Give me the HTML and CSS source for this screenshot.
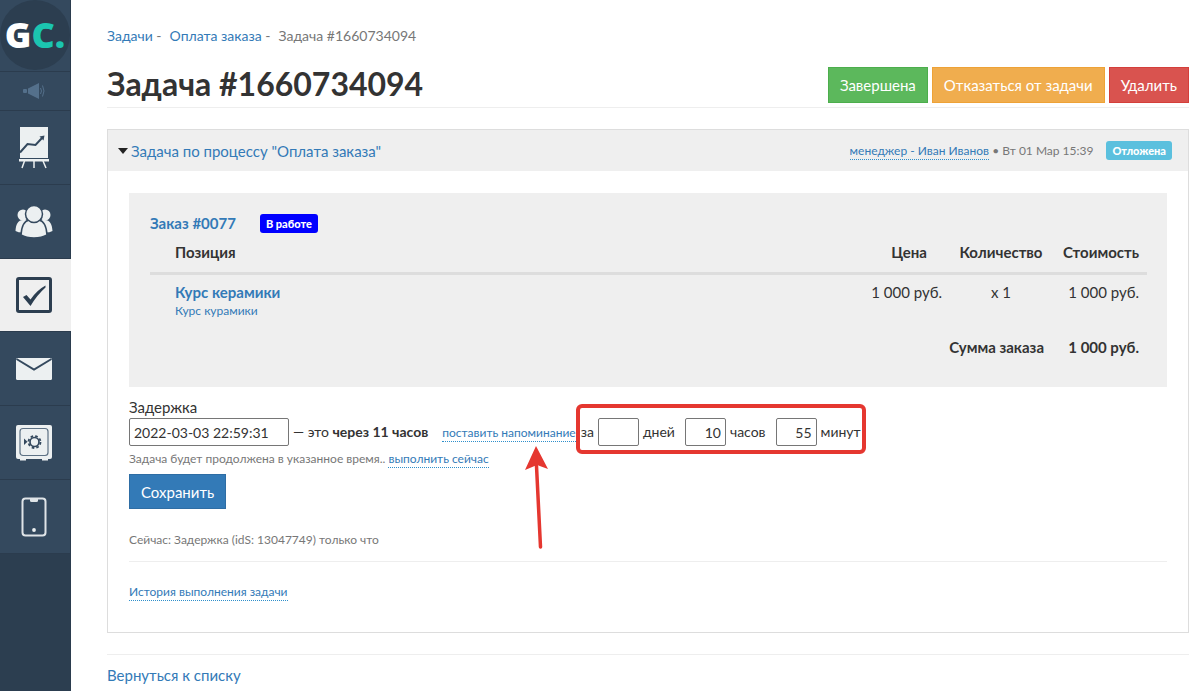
FILE: index.html
```html
<!DOCTYPE html>
<html lang="ru">
<head>
<meta charset="utf-8">
<meta name="viewport" content="width=device-width, initial-scale=1">
<title>Задача #1660734094</title>
<link rel="stylesheet" href="styles.css">
</head>
<body>
<div class="layout">
  <nav class="sidebar" aria-label="Главное меню">
    <a class="logo" href="#"><span class="logo-mark">G<span class="logo-accent">C.</span></span></a>
    <a class="nav-item nav-small" href="#" aria-label="Новости">
      <svg width="24" height="16" viewBox="0 0 24 16"><g fill="#54708b"><rect x="1" y="6" width="4" height="4" rx="1"/><path d="M6 5.500 17 0V16L6 10.500Z"/></g><path d="M18.500 5q2 3 0 6M20.500 2.500q3 5.500 0 11" fill="none" stroke="#54708b"/></svg>
    </a>
    <a class="nav-item" href="#" aria-label="Статистика">
      <svg width="30" height="42" viewBox="0 0 30 42"><path fill="#ecf0f1" d="M1 0H29V32H1z"/><path fill="#ecf0f1" d="M0 32H30V34.500H0z"/><path d="M1 31.500H29" stroke="#34495e"/><path d="M5.500 34 3 41M15 34V41M24 34l3 7" stroke="#ecf0f1" stroke-width="1.500" fill="none"/><path d="M1 25.500 8.500 17 16.500 18 23 11" stroke="#34495e" stroke-width="2" fill="none"/><path d="M25.500 8.500 24.500 13.500 20.500 9.500z" fill="#34495e"/></svg>
    </a>
    <a class="nav-item" href="#" aria-label="Пользователи">
      <svg width="38" height="33" viewBox="0 0 38 33"><g fill="#ecf0f1"><circle cx="8" cy="10" r="5.500"/><circle cx="30" cy="10" r="5.500"/><path d="M0.500 26C1 19 3 15 8 15h4l-4 12.500Q3 27.500 0.500 26zM37.500 26C37 19 35 15 30 15h-4l4 12.500Q35 27.500 37.500 26z"/></g><g fill="#ecf0f1" stroke="#34495e" stroke-width="1.500"><path d="M6 30C6.500 22 9 16 14 15h10c5 1 7.500 7 8 15-7 4-19 4-26 0z"/><circle cx="19" cy="9" r="8.500"/></g></svg>
    </a>
    <a class="nav-item nav-active" href="#" aria-label="Задачи" aria-current="page">
      <svg width="36" height="36" viewBox="0 0 36 36"><rect x="1.500" y="1.500" width="33" height="33" rx="1.500" fill="none" stroke="#2c3e50" stroke-width="3"/><path fill="#2c3e50" d="M7 20 10.500 18 14.500 22.500Q21 13 29.500 8.500V10.500Q21 18 14.500 29Z"/></svg>
    </a>
    <a class="nav-item" href="#" aria-label="Сообщения">
      <svg width="36" height="22" viewBox="0 0 36 22"><rect width="36" height="22" rx="1.500" fill="#ecf0f1"/><path d="M0.500 1 18 11.500 35.500 1" fill="none" stroke="#34495e" stroke-width="2"/></svg>
    </a>
    <a class="nav-item" href="#" aria-label="Финансы">
      <svg width="36" height="36" viewBox="0 0 36 36"><rect width="36" height="34" rx="2" fill="#ecf0f1"/><path fill="#ecf0f1" d="M4 33h6v2.500H4zM26 33h6v2.500h-6z"/><rect x="4" y="3.500" width="28" height="27" rx="3" fill="none" stroke="#5d7184" stroke-width="1.200"/><path d="M8 13.500v6.500l3.500-3.200z" fill="#34495e"/><circle cx="18.500" cy="17" r="4.500" fill="none" stroke="#34495e" stroke-width="1.700"/><circle cx="18.500" cy="17" r="6" fill="none" stroke="#34495e" stroke-width="1.800" stroke-dasharray="2.600 2.110"/></svg>
    </a>
    <a class="nav-item" href="#" aria-label="Приложение">
      <svg width="26" height="40" viewBox="0 0 26 40"><rect x="1.500" y="1.500" width="23" height="37" rx="3" fill="none" stroke="#dfe4e7" stroke-width="2"/><path d="M9 2h8v1.500q0 1.500-1.500 1.500h-5q-1.500 0-1.500-1.500z" fill="#dfe4e7"/><circle cx="13" cy="33" r="1.900" fill="#ecf0f1"/></svg>
    </a>
  </nav>

  <main class="content">
    <div class="breadcrumbs"><span><a href="#">Задачи</a> -</span><span><a href="#">Оплата заказа</a> -</span><span>Задача #1660734094</span></div>
    <header class="page-header">
      <h1>Задача #1660734094</h1>
      <div class="actions">
        <button type="button" class="btn btn-success">Завершена</button>
        <button type="button" class="btn btn-warning">Отказаться от задачи</button>
        <button type="button" class="btn btn-danger">Удалить</button>
      </div>
    </header>

    <section class="card">
      <div class="card-header">
        <a class="card-title" href="#"><svg width="10" height="6" viewBox="0 0 10 6"><path d="M0 0H10L5 6z" fill="#222"/></svg>Задача по процессу "Оплата заказа"</a>
        <div class="card-meta"><span><a class="dotted" href="#">менеджер - Иван Иванов</a> • Вт 01 Мар 15:39</span><span class="badge badge-info">Отложена</span></div>
      </div>
      <div class="card-body">
        <div class="order">
          <div class="order-head"><a href="#">Заказ #0077</a><span class="badge badge-work">В работе</span></div>
          <table class="order-table">
            <colgroup><col><col class="col-price"><col class="col-count"><col class="col-total"></colgroup>
            <thead><tr><th>Позиция</th><th>Цена</th><th>Количество</th><th>Стоимость</th></tr></thead>
            <tbody><tr><td><a class="item-name" href="#">Курс керамики</a><a class="item-note" href="#">Курс курамики</a></td><td>1 000 руб.</td><td>x 1</td><td>1 000 руб.</td></tr></tbody>
            <tfoot><tr><td colspan="3">Сумма заказа</td><td>1 000 руб.</td></tr></tfoot>
          </table>
        </div>

        <form class="delay-form">
          <label for="delay">Задержка</label>
          <div class="delay-row">
            <input id="delay" class="field field-date" type="text" value="2022-03-03 22:59:31">
            <span class="delay-text">— это <b>через 11 часов</b></span>
            <span class="remind"><a class="dotted" href="#">поставить напоминание</a>
              <svg class="arrow" width="24" height="104" viewBox="0 0 24 104"><path d="M11.500 20 15.500 101" stroke="#e53730" stroke-width="3.500" stroke-linecap="round"/><path d="M11 0 23 23 12 19 0 24z" fill="#e53730"/></svg>
            </span>
            <span class="before">
              <label for="days">за</label><input id="days" class="field field-num" type="text" value="">
              <label class="unit" for="days">дней</label><input id="hours" class="field field-num" type="text" value="10">
              <label class="unit" for="hours">часов</label><input id="minutes" class="field field-num" type="text" value="55">
              <label for="minutes">минут</label>
            </span>
          </div>
          <p class="hint">Задача будет продолжена в указанное время.. <a class="dotted" href="#">выполнить сейчас</a></p>
          <button type="button" class="btn btn-primary">Сохранить</button>
        </form>
        <p class="status">Сейчас: Задержка (idS: 13047749) только что</p>
        <div class="history"><a class="dotted" href="#">История выполнения задачи</a></div>
      </div>
    </section>
    <footer class="footer"><a href="#">Вернуться к списку</a></footer>
  </main>
</div>
</body>
</html>
```
FILE: styles.css
```css
* { box-sizing: border-box; }
body {
  margin: 0;
  background: #fff;
  color: #333;
  font: 15px/20px Lato, "Noto Sans", sans-serif;
}
a { color: #337ab7; text-decoration: none; }
h1, p { margin: 0; }
svg { display: block; flex: none; }
.layout { display: flex; min-height: 100vh; }

.sidebar { width: 71px; flex: none; background: #2c3e50; border-right: 1px solid #2b3c4e; }
.logo, .nav-item {
  display: flex;
  align-items: center;
  justify-content: center;
  background: #34495e;
  border-bottom: 1px solid #2b3c4e;
}
.logo { height: 72px; align-items: flex-start; }
.logo-mark {
  width: 70px;
  height: 70px;
  border-radius: 50%;
  background: #2c3e50;
  color: #fff;
  font: 800 36px/70px "Open Sans", sans-serif;
  text-align: center;
}
.logo-accent { color: #1bc5b0; }
.nav-item { height: 74px; padding-right: 2px; }
.nav-small { height: 39px; }
.nav-active { height: 73px; background: #efefef; margin-right: -1px; padding-right: 3px; }

.content { flex: 1; min-width: 0; padding: 26px 11px 0 36px; }
.breadcrumbs { display: flex; gap: 8px; font-size: 14px; color: #777; }
.page-header {
  display: flex;
  align-items: flex-start;
  justify-content: space-between;
  margin-top: 21px;
  padding-bottom: 4px;
  border-bottom: 1px solid #eee;
}
h1 { font-size: 32px; line-height: 34px; font-weight: 700; }
.actions { display: flex; gap: 4px; }
.btn {
  height: 36px;
  padding: 0 11px;
  border: 1px solid;
  color: #fff;
  font: inherit;
}
.btn-success { background: #5cb85c; border-color: #4cae4c; }
.btn-warning { background: #f0ad4e; border-color: #eea236; }
.btn-danger { background: #d9534f; border-color: #d43f3a; }
.btn-primary { background: #337ab7; border-color: #2e6da4; }

.card { margin-top: 21px; border: 1px solid #ddd; }
.card-header {
  display: flex;
  align-items: center;
  justify-content: space-between;
  height: 41px;
  padding: 0 16px 0 10px;
  background: #efefef;
}
.card-title { display: flex; align-items: center; gap: 3px; }
.card-meta { display: flex; align-items: center; gap: 13px; font-size: 12px; color: #777; }
.dotted { padding-bottom: 1px; border-bottom: 1px dotted #2f8fcb; font-size: 12px; }
.badge { padding: 0 6px; border-radius: 3px; color: #fff; font-size: 11px; line-height: 19px; font-weight: 900; }
.badge-info { background: #5bc0de; }
.badge-work { background: #00f; }
.card-body { padding: 22px 21px 30px; }

.order { height: 194px; padding: 20px 20px 0 21px; background: #efefef; }
.order-head { display: flex; align-items: center; gap: 24px; font-weight: 700; }
.order-table { width: 100%; margin-top: 5px; border-collapse: collapse; table-layout: fixed; }
.col-price { width: 82px; }
.col-count { width: 102px; }
.col-total { width: 95px; }
th, td { padding: 4px 8px 10px; text-align: right; vertical-align: top; }
th { border-bottom: 3px solid #ddd; font-weight: 700; }
th:first-child, tbody td:first-child { padding-left: 25px; text-align: left; }
th:nth-child(2), th:nth-child(3), tbody td:nth-child(3) { text-align: center; }
th:nth-child(n+2) { padding-left: 0; padding-right: 0; }
.order-table th:last-child { padding-right: 8px; }
tbody td { padding-top: 7px; }
td:nth-child(n+2) { padding-left: 0; white-space: nowrap; }
tbody td:nth-child(3) { padding-right: 0; }
tfoot td { padding-top: 7px; font-weight: 700; }
.item-name, .item-note { display: block; }
.item-name { font-weight: 700; }
.item-note { font-size: 12px; line-height: 18px; }

.delay-form { margin-top: 10px; }
.delay-row { display: flex; align-items: center; margin-top: 1px; font-size: 14px; }
.field {
  height: 28px;
  padding: 0 4px;
  border: 1px solid #767676;
  border-radius: 2px;
  background: #fff;
  color: #333;
  font: inherit;
}
.field-date { width: 160px; }
.field-num { width: 41px; margin: 0 4px; text-align: right; }
.delay-text { margin: 0 14px 0 4px; }
.remind { position: relative; }
.arrow { position: absolute; left: 83px; top: 24px; }
.before { position: relative; display: flex; align-items: center; padding-left: 5px; }
.before::after {
  content: "";
  position: absolute;
  inset: -14px -5px -8px 0;
  border: 4px solid #e53730;
  border-radius: 6px;
  pointer-events: none;
}
.unit { margin-right: 6px; }
.hint { margin-top: 3px; font-size: 12px; color: #777; }
.btn-primary { height: 35px; margin-top: 5px; }
.status { margin-top: 21px; padding-bottom: 11px; border-bottom: 1px solid #eee; font-size: 12px; color: #777; }
.history { margin-top: 18px; }
.footer { margin-top: 21px; padding: 10px 0; border-top: 1px solid #eee; }
```
